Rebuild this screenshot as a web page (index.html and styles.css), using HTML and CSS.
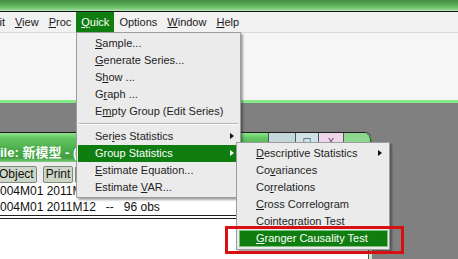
FILE: index.html
```html
<!DOCTYPE html>
<html lang="en">
<head>
  <meta charset="UTF-8">
  <title>EViews - Quick menu</title>
  <link rel="stylesheet" href="styles.css">
</head>
<body>
  <div class="screen">
    <div class="titlebar"></div>
    <div class="menubar">
      <span class="mb-item">Edit</span>
      <span class="mb-item"><u>V</u>iew</span>
      <span class="mb-item"><u>P</u>roc</span>
      <span class="mb-item active"><u>Q</u>uick</span>
      <span class="mb-item">Options</span>
      <span class="mb-item"><u>W</u>indow</span>
      <span class="mb-item"><u>H</u>elp</span>
    </div>
    <div class="cmdarea"></div>
    <div class="mdi">
      <div class="child">
        <div class="child-title">
          <span class="child-name">ile: 新模型 - (</span>
          <div class="tbtns">
            <span class="tbtn min"></span>
            <span class="tbtn max">□</span>
            <span class="tbtn close">x</span>
            <span class="tbtn corner"></span>
          </div>
        </div>
        <div class="child-tools">
          <span class="tool first">Object</span>
          <span class="tool spaced">Print</span>
          <span class="tool">Save</span>
        </div>
        <div class="child-body">
          <div class="info">004M01 2011M12   --   96 obs</div>
          <div class="info">004M01 2011M12   --   96 obs</div>
          <div class="rule"></div>
        </div>
      </div>
    </div>

    <div class="menu quick-menu">
      <div class="item"><u>S</u>ample...</div>
      <div class="item"><u>G</u>enerate Series...</div>
      <div class="item">S<u>h</u>ow ...</div>
      <div class="item">G<u>r</u>aph ...</div>
      <div class="item">E<u>m</u>pty Group (Edit Series)</div>
      <div class="sep"></div>
      <div class="item more">Ser<u>i</u>es Statistics</div>
      <div class="item more active">Group Statistics</div>
      <div class="item"><u>E</u>stimate Equation...</div>
      <div class="item">Estimate <u>V</u>AR...</div>
    </div>

    <div class="menu sub-menu">
      <div class="item more"><u>D</u>escriptive Statistics</div>
      <div class="item">Co<u>v</u>ariances</div>
      <div class="item">Co<u>r</u>relations</div>
      <div class="item"><u>C</u>ross Correlogram</div>
      <div class="item">Cointe<u>g</u>ration Test</div>
      <div class="item active"><u>G</u>ranger Causality Test</div>
    </div>

    <div class="callout"></div>
  </div>
</body>
</html>
```

FILE: styles.css
```css
body {
  margin: 0;
  background: #808080;
}
.screen {
  position: relative;
  width: 458px;
  height: 259px;
  overflow: hidden;
  font-family: "Liberation Sans", Arial, sans-serif;
  font-size: 11px;
  color: #1a1a1a;
  background: #808080;
}
.titlebar {
  height: 11px;
  border-bottom: 1px solid #151515;
  background: linear-gradient(#468a45 0, #4f9e4d 25%, #5db65b 55%, #7fcb7f 80%, #b8e4b8 100%);
}
.menubar {
  display: flex;
  height: 20px;
  line-height: 20px;
  margin-left: -19px;
  padding-left: 0;
  background: #f1f1f1;
  white-space: nowrap;
}
.mb-item {
  padding: 0 5px;
}
.mb-item.active {
  background: #0f7d0f;
  color: #fff;
}
.cmdarea {
  height: 67px;
  border-top: 1px solid #d9d9d9;
  background: #f6f6f6;
}
.mdi {
  height: 156px;
  border-top: 3px solid #86ea86;
  padding-top: 29px;
  box-sizing: border-box;
  background: #808080;
}
.child {
  width: 372px;
  height: 200px;
  border-top: 1px solid #1c1c1c;
  border-top-right-radius: 8px;
  background: #fff;
  overflow: hidden;
}
.child-title {
  display: flex;
  height: 29px;
  background: linear-gradient(#8ee48e 0, #62c562 18%, #4cae4c 55%, #3f9f3f 85%, #7ccc7c 100%);
}
.child-name {
  flex: 1;
  padding-top: 9px;
  color: #fff;
  font-weight: bold;
  font-size: 13px;
  font-family: "Liberation Sans", "Noto Sans CJK SC", sans-serif;
  white-space: nowrap;
}
.tbtns {
  display: flex;
  height: 22px;
}
.tbtn {
  width: 25px;
  border-left: 1px solid #4d5a5a;
  border-bottom: 1px solid #4d5a5a;
  text-align: center;
  font-size: 12px;
  line-height: 16px;
}
.tbtn.min {
  width: 26px;
  background: #c4d8dc;
}
.tbtn.max {
  width: 22px;
  background: #cfe2e8;
}
.tbtn.close {
  width: 24px;
  background: #efd7ea;
  color: #7a4a78;
}
.tbtn.corner {
  width: 26px;
  border-bottom: none;
  border-right: 2px solid #3c6e3c;
  border-top-right-radius: 8px;
  background: #8fd68f;
}
.child-tools {
  display: flex;
  height: 21px;
  padding-top: 4px;
  box-sizing: border-box;
  background: #ededed;
  font-size: 12px;
}
.tool {
  height: 15px;
  line-height: 15px;
  padding: 0 2px;
  margin-right: 2px;
  border: 1px solid #7d8a7b;
  border-radius: 2px;
  background: #cdd7c7;
  color: #111;
}
.tool.first {
  margin-left: -4px;
}
.tool.spaced {
  margin-left: 4px;
}
.child-body {
  height: 150px;
  border-right: 3px solid #c7e5c7;
  box-shadow: inset -1px 0 #555;
}
.info {
  height: 16px;
  line-height: 16px;
  font-size: 12px;
  color: #111;
  white-space: pre;
}
.rule {
  height: 2px;
  border-top: 1px solid #222;
  border-bottom: 1px solid #222;
}

.menu {
  position: absolute;
  box-sizing: border-box;
  border: 1px solid #9c9c9c;
  background: #ebebeb;
  box-shadow: 2px 2px 2px rgba(0, 0, 0, 0.35);
  white-space: nowrap;
}
.quick-menu {
  left: 76px;
  top: 32px;
  width: 165px;
  padding: 2px 3px 1px 1px;
}
.sub-menu {
  left: 236px;
  top: 142px;
  width: 154px;
  padding: 2px 1px 2px 2px;
}
.item {
  position: relative;
  height: 17px;
  line-height: 17px;
  padding-left: 17px;
  color: #1e1e1e;
}
.item.active {
  background: #0f7d0f;
  color: #fff;
}
.item.more::after {
  content: "";
  position: absolute;
  right: 3px;
  top: 5px;
  border-left: 4px solid #111;
  border-top: 3.5px solid transparent;
  border-bottom: 3.5px solid transparent;
}
.sub-menu .item.more::after {
  right: 6px;
}
.item.more.active::after {
  border-left-color: #fff;
}
.sep {
  height: 8px;
  margin: 0 -1px 0 1px;
  background: linear-gradient(#ebebeb 3px, #b4b4b4 3px, #b4b4b4 4px, #fff 4px, #fff 5px, #ebebeb 5px);
}
.sub-menu .item.active {
  box-shadow: inset 0 0 0 1px #7cbf7c;
}
.callout {
  position: absolute;
  left: 225px;
  top: 226px;
  width: 179px;
  height: 28px;
  box-sizing: border-box;
  border: 3px solid #d81010;
}
```
